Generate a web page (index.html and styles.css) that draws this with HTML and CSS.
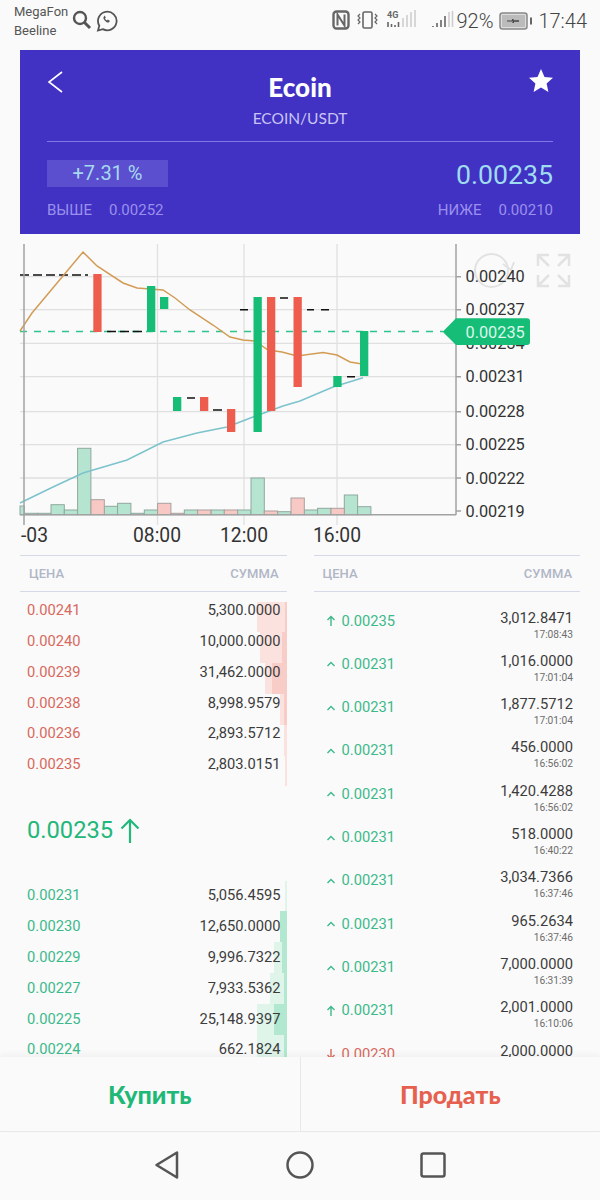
FILE: index.html
```html
<!DOCTYPE html>
<html lang="en">
  <head>
    <meta charset="UTF-8" />
    <meta name="viewport" content="width=device-width, initial-scale=1.0" />
    <title>Ecoin</title>
    <link rel="stylesheet" href="styles.css">
  </head>

  <body>
    <svg class="defs" width="0" height="0">
      <symbol id="arrow-up" viewBox="0 0 10 12"><path d="M5 11V1.500M1.500 5 5 1.500 8.500 5" fill="none" stroke="currentColor" stroke-width="1.400"/></symbol>
      <symbol id="arrow-down" viewBox="0 0 10 12"><path d="M5 1v9.500M1.500 7 5 10.500 8.500 7" fill="none" stroke="currentColor" stroke-width="1.400"/></symbol>
      <symbol id="caret" viewBox="0 0 10 12"><path d="M1.500 8 5 4.500 8.500 8" fill="none" stroke="currentColor" stroke-width="1.400"/></symbol>
    </svg>

    <div class="page">
      <!-- status bar -->
      <div class="status">
        <div class="carriers"><span>MegaFon</span><span>Beeline</span></div>
        <svg class="status-app" width="46" height="24" viewBox="0 0 46 24">
          <circle cx="8" cy="9" r="6" fill="none" stroke="#555" stroke-width="2.400"/>
          <path d="M12.500 13.500 18 19" stroke="#555" stroke-width="3"/>
          <path d="M26 21.500l1.300-4.800a9.300 9.300 0 1 1 3.500 3.400z" fill="none" stroke="#555" stroke-width="1.800"/>
          <path d="M32 7.500c-1 1-.7 2.400.7 4s3 2.600 4.200 1.800l1.100-1.300-2.100-1.400-.9.800c-.9-.4-1.500-1.100-2-2l.8-.9-1.100-2z" fill="#555"/>
        </svg>
        <svg class="status-icons" width="122" height="24" viewBox="0 0 122 24">
          <rect x="1.500" y="2.500" width="15" height="17" rx="3" fill="none" stroke="#666" stroke-width="2.400"/>
          <path d="M5.500 16.500v-11l7 11v-11" fill="none" stroke="#666" stroke-width="2"/>
          <rect x="31" y="3" width="9" height="16" rx="1.500" fill="none" stroke="#666" stroke-width="1.600"/>
          <path d="M28 5l-2 2 2 2-2 2 2 2-2 2M43 5l2 2-2 2 2 2-2 2 2 2" fill="none" stroke="#666" stroke-width="1.200"/>
          <text class="net" x="55" y="9">4G</text>
          <path d="M56 18v-5M59.500 18v-3M63 18v-2M66.500 18v-5" stroke="#666" stroke-width="1.600"/>
          <path d="M71 18v-9M75 18v-12M79 18v-15M83 18v-17" stroke="#ccc" stroke-width="1.500"/>
          <path d="M101 18v-1M105 18v-4M109 18v-7M113 18v-11" stroke="#666" stroke-width="1.600"/>
          <path d="M117 18v-15M120.500 18v-16" stroke="#ccc" stroke-width="1.500"/>
        </svg>
        <span class="status-text percent">92%</span>
        <svg class="battery" width="33" height="18" viewBox="0 0 33 18">
          <rect x="1" y="1" width="27" height="16" rx="2.500" fill="#ddd" stroke="#888" stroke-width="1.500"/>
          <rect x="3" y="3" width="23" height="12" fill="#bbb"/>
          <path d="M8 9h5l1-2v2h6l-5 0-1 2V9" fill="#444" stroke="#444"/>
          <rect x="31" y="5.500" width="2" height="7" fill="#666"/>
        </svg>
        <span class="status-text clock">17:44</span>
      </div>

      <!-- coin header -->
      <div class="market">
        <div class="market-top">
          <svg class="back" width="16" height="22" viewBox="0 0 16 22"><path d="M15 1 2 11l13 10" fill="none" stroke="#fff" stroke-width="1.600"/></svg>
          <div class="market-title">
            <h1>Ecoin</h1>
            <div class="pair">ECOIN/USDT</div>
          </div>
          <svg class="star" width="24" height="23" viewBox="0 0 24 23"><path d="M12 0l3.500 7.900 8.500.9-6.400 5.700 1.800 8.500L12 18.600 4.600 23l1.800-8.500L0 8.800l8.500-.9z" fill="#fff"/></svg>
        </div>
        <div class="market-price">
          <div class="change">+7.31 %</div>
          <div class="last">0.00235</div>
        </div>
        <div class="market-range">
          <div><span class="range-label">ВЫШЕ</span>0.00252</div>
          <div><span class="range-label">НИЖЕ</span>0.00210</div>
        </div>
      </div>

      <!-- chart, drawn in page coordinates -->
      <svg class="chart" width="600" height="310" viewBox="0 240 600 310">
        <g class="grid">
          <path d="M20 276.700H456M20 309.700H456M20 343.300H456M20 376.700H456M20 411.700H456M20 444.700H456M20 478H456"/>
          <path d="M157.500 244V525M244 244V525M337 244V525"/>
        </g>

        <g class="vol-green">
          <rect x="20" y="506" width="4.300" height="8.700"/>
          <rect x="24.300" y="513.300" width="13.300" height="1.400"/>
          <rect x="37.600" y="513.300" width="13.300" height="1.400"/>
          <rect x="51" y="504.700" width="13.300" height="10"/>
          <rect x="64.300" y="510" width="13.300" height="4.700"/>
          <rect x="77.600" y="448.300" width="13.300" height="66.400"/>
          <rect x="104.300" y="506.300" width="13.300" height="8.400"/>
          <rect x="117.600" y="503.300" width="13.300" height="11.400"/>
          <rect x="131" y="513.300" width="13.300" height="1.400"/>
          <rect x="144.300" y="510" width="13.300" height="4.700"/>
          <rect x="184.300" y="510" width="13.300" height="4.700"/>
          <rect x="211" y="510" width="13.300" height="4.700"/>
          <rect x="237.600" y="510" width="13.300" height="4.700"/>
          <rect x="251" y="478" width="13.300" height="36.700"/>
          <rect x="277.600" y="511.700" width="13.300" height="3"/>
          <rect x="304.300" y="510" width="13.300" height="4.700"/>
          <rect x="317.600" y="508.300" width="13.300" height="6.400"/>
          <rect x="344.300" y="495" width="13.300" height="19.700"/>
          <rect x="357.600" y="506.700" width="13.300" height="8"/>
        </g>
        <g class="vol-red">
          <rect x="91" y="499.700" width="13.300" height="15"/>
          <rect x="157.600" y="503.300" width="13.300" height="11.400"/>
          <rect x="171" y="513.300" width="13.300" height="1.400"/>
          <rect x="197.600" y="510" width="13.300" height="4.700"/>
          <rect x="224.300" y="510" width="13.300" height="4.700"/>
          <rect x="264.300" y="511" width="13.300" height="3.700"/>
          <rect x="291" y="498" width="13.300" height="16.700"/>
          <rect x="331" y="508.300" width="13.300" height="6.400"/>
        </g>

        <path class="last-line" d="M20 331.500H443"/>
        <path class="flat" d="M20 275H88M107 331.500H143"/>
        <path class="flat solid" d="M187 398H195M213 410H222M240 309.700H248M280 298H288M307 309.700H314M321 309.700H329M347 376.700H355"/>

        <polyline class="ma-slow" points="20,503 53,487 83,473 127,460 163,442 197,433 227,427 253,417 283,406 300,401 333,387 363,377.700"/>
        <polyline class="ma-fast" points="20,331 32,313 83,252 97,266 123,283 137,288 163,290 175,298 190,310 213,325 230,337 243,340 255,341 268,350 282,352 297,356 323,352.500 337,355 350,362 362,364"/>

        <g class="up">
          <rect x="147" y="286" width="8.300" height="46"/>
          <rect x="160" y="297" width="8.300" height="12"/>
          <rect x="173" y="397" width="8.300" height="14"/>
          <rect x="253.500" y="297" width="8.300" height="135"/>
          <rect x="333.300" y="376" width="8.300" height="11"/>
          <rect x="360" y="331" width="8.300" height="45"/>
        </g>
        <g class="down">
          <rect x="93.300" y="274" width="8.300" height="58"/>
          <rect x="200" y="397" width="8.300" height="14"/>
          <rect x="227" y="409" width="8.300" height="23"/>
          <rect x="267" y="297" width="8.300" height="114"/>
          <rect x="293.500" y="297" width="8.300" height="90"/>
        </g>

        <path class="axis" d="M24 244V525M456 244V515M20 514.700H456M456 276.700H461M456 309.700H461M456 376.700H461M456 411.700H461M456 444.700H461M456 478H461M456 511H461"/>

        <g class="refresh">
          <circle cx="491.500" cy="270.500" r="16.500"/>
          <path d="M503 264l8 6 3-8"/>
        </g>
        <g class="fullscreen">
          <path d="M538 266v-11h11M538 255l11 11M569 266v-11h-11M569 255l-11 11M538 275v11h11M538 286l11-11M569 275v11h-11M569 286l-11-11"/>
        </g>

        <g class="y-label">
          <text x="465.500" y="281.500">0.00240</text>
          <text x="465.500" y="314.800">0.00237</text>
          <text x="465.500" y="348.800">0.00234</text>
          <text x="465.500" y="382">0.00231</text>
          <text x="465.500" y="416.800">0.00228</text>
          <text x="465.500" y="450">0.00225</text>
          <text x="465.500" y="483.800">0.00222</text>
          <text x="465.500" y="516.800">0.00219</text>
        </g>
        <path class="tag" d="M442.700 331.700 456 318.300H527a3 3 0 0 1 3 3V342a3 3 0 0 1-3 3H456z"/>
        <text class="tag-text" x="465.500" y="338">0.00235</text>

        <g class="x-label">
          <text x="21" y="541.500">-03</text>
          <text x="133" y="541.500">08:00</text>
          <text x="220" y="541.500">12:00</text>
          <text x="313" y="541.500">16:00</text>
        </g>
      </svg>

      <!-- order book and trades -->
      <div class="book">
        <div class="book-col">
          <div class="book-head"><span>ЦЕНА</span><span>СУММА</span></div>
          <div class="orders asks">
            <div class="order"><i class="depth" style="width:30px"></i><i class="depth dark" style="width:2px"></i><span class="price sell">0.00241</span><span class="amount">5,300.0000</span></div>
            <div class="order"><i class="depth" style="width:27px"></i><i class="depth dark" style="width:5px"></i><span class="price sell">0.00240</span><span class="amount">10,000.0000</span></div>
            <div class="order"><i class="depth" style="width:22px"></i><i class="depth dark" style="width:15px"></i><span class="price sell">0.00239</span><span class="amount">31,462.0000</span></div>
            <div class="order"><i class="depth" style="width:7px"></i><i class="depth dark" style="width:3px"></i><span class="price sell">0.00238</span><span class="amount">8,998.9579</span></div>
            <div class="order"><i class="depth" style="width:3px"></i><span class="price sell">0.00236</span><span class="amount">2,893.5712</span></div>
            <div class="order"><i class="depth" style="width:2px"></i><span class="price sell">0.00235</span><span class="amount">2,803.0151</span></div>
          </div>
          <div class="mid">
            <span>0.00235</span>
            <svg width="20" height="25" viewBox="0 0 20 25"><path d="M10 25V2M1.500 10.500 10 2l8.500 8.500" fill="none" stroke="currentColor" stroke-width="2.200"/></svg>
          </div>
          <div class="orders bids">
            <div class="order"><i class="depth" style="width:2px"></i><span class="price buy">0.00231</span><span class="amount">5,056.4595</span></div>
            <div class="order"><i class="depth" style="width:7px"></i><i class="depth dark" style="width:7px"></i><span class="price buy">0.00230</span><span class="amount">12,650.0000</span></div>
            <div class="order"><i class="depth" style="width:13px"></i><i class="depth dark" style="width:5px"></i><span class="price buy">0.00229</span><span class="amount">9,996.7322</span></div>
            <div class="order"><i class="depth" style="width:17px"></i><i class="depth dark" style="width:3px"></i><span class="price buy">0.00227</span><span class="amount">7,933.5362</span></div>
            <div class="order"><i class="depth" style="width:30px"></i><i class="depth dark" style="width:13px"></i><span class="price buy">0.00225</span><span class="amount">25,148.9397</span></div>
            <div class="order"><i class="depth" style="width:30px"></i><i class="depth dark" style="width:3px"></i><span class="price buy">0.00224</span><span class="amount">662.1824</span></div>
          </div>
        </div>

        <div class="book-col">
          <div class="book-head"><span>ЦЕНА</span><span>СУММА</span></div>
          <div class="trades">
            <div class="trade"><span class="price buy"><svg><use href="#arrow-up"/></svg>0.00235</span><div class="trade-right"><div class="amount">3,012.8471</div><div class="time">17:08:43</div></div></div>
            <div class="trade"><span class="price buy"><svg><use href="#caret"/></svg>0.00231</span><div class="trade-right"><div class="amount">1,016.0000</div><div class="time">17:01:04</div></div></div>
            <div class="trade"><span class="price buy"><svg><use href="#caret"/></svg>0.00231</span><div class="trade-right"><div class="amount">1,877.5712</div><div class="time">17:01:04</div></div></div>
            <div class="trade"><span class="price buy"><svg><use href="#caret"/></svg>0.00231</span><div class="trade-right"><div class="amount">456.0000</div><div class="time">16:56:02</div></div></div>
            <div class="trade"><span class="price buy"><svg><use href="#caret"/></svg>0.00231</span><div class="trade-right"><div class="amount">1,420.4288</div><div class="time">16:56:02</div></div></div>
            <div class="trade"><span class="price buy"><svg><use href="#caret"/></svg>0.00231</span><div class="trade-right"><div class="amount">518.0000</div><div class="time">16:40:22</div></div></div>
            <div class="trade"><span class="price buy"><svg><use href="#caret"/></svg>0.00231</span><div class="trade-right"><div class="amount">3,034.7366</div><div class="time">16:37:46</div></div></div>
            <div class="trade"><span class="price buy"><svg><use href="#caret"/></svg>0.00231</span><div class="trade-right"><div class="amount">965.2634</div><div class="time">16:37:46</div></div></div>
            <div class="trade"><span class="price buy"><svg><use href="#caret"/></svg>0.00231</span><div class="trade-right"><div class="amount">7,000.0000</div><div class="time">16:31:39</div></div></div>
            <div class="trade"><span class="price buy"><svg><use href="#arrow-up"/></svg>0.00231</span><div class="trade-right"><div class="amount">2,001.0000</div><div class="time">16:10:06</div></div></div>
            <div class="trade"><span class="price sell"><svg><use href="#arrow-down"/></svg>0.00230</span><div class="trade-right"><div class="amount">2,000.0000</div></div></div>
          </div>
        </div>
      </div>

      <div class="actions">
        <button class="action buy-button">Купить</button>
        <button class="action sell-button">Продать</button>
      </div>

      <div class="nav">
        <svg width="26" height="30" viewBox="0 0 26 30"><path d="M2.500 15 23 2.500v25z" fill="none" stroke="#555" stroke-width="2.500" stroke-linejoin="round"/></svg>
        <svg width="28" height="28" viewBox="0 0 28 28"><circle cx="14" cy="14" r="12.500" fill="none" stroke="#555" stroke-width="2.500"/></svg>
        <svg width="26" height="26" viewBox="0 0 26 26"><rect x="1.500" y="1.500" width="23" height="23" rx="2" fill="none" stroke="#555" stroke-width="2.500"/></svg>
      </div>
    </div>
  </body>
</html>
```

FILE: styles.css
```css
body {
  margin: 0;
  background: #fafafa;
  font-family: Roboto, "Liberation Sans", sans-serif;
}

.defs {
  position: absolute;
}

.page {
  width: 600px;
  height: 1200px;
  display: flex;
  flex-direction: column;
  overflow: hidden;
  background: #fafafa;
}

/* Status bar */
.status {
  height: 50px;
  flex: none;
  box-sizing: border-box;
  padding-bottom: 8px;
  display: flex;
  align-items: center;
  color: #555;
}

.carriers {
  display: flex;
  flex-direction: column;
  gap: 3px;
  margin-left: 14px;
  font-size: 13px;
  line-height: 16px;
  width: 58px;
}

.status-icons {
  margin-left: auto;
}

.net {
  font-size: 9px;
  font-weight: 700;
  fill: #666;
}

.status-text {
  font-size: 20px;
  font-weight: 300;
  color: #444;
}

.percent {
  margin-left: 2px;
}

.battery {
  margin-left: 6px;
}

.clock {
  margin-left: 6px;
  margin-right: 13px;
}

/* Coin header */
.market {
  height: 184px;
  flex: none;
  margin: 0 20px;
  padding: 0 27px;
  box-sizing: border-box;
  background: #4132c4;
}

.market-top {
  height: 92px;
  box-sizing: border-box;
  border-bottom: 1.5px solid #8078e8;
  display: grid;
  grid-template-columns: 40px 1fr 40px;
}

.back {
  margin-top: 21px;
}

.star {
  margin-top: 19px;
  justify-self: end;
}

.market-title {
  text-align: center;
}

.market-title h1 {
  margin: 21px 0 0;
  font-family: Lato, Roboto, sans-serif;
  font-size: 26px;
  font-weight: 900;
  line-height: 32px;
  color: #fff;
}

.pair {
  margin-top: 5px;
  font-family: Lato, Roboto, sans-serif;
  font-size: 15.500px;
  line-height: 20px;
  color: #c9c4f3;
}

.market-price {
  margin-top: 18px;
  display: flex;
  justify-content: space-between;
  align-items: flex-start;
}

.change {
  width: 121px;
  height: 27px;
  background: #5b4fcf;
  color: #a6d9f0;
  font-size: 20px;
  line-height: 27px;
  text-align: center;
}

.last {
  color: #9fdcf0;
  font-size: 26.700px;
  line-height: 30px;
}

.market-range {
  margin-top: 10px;
  display: flex;
  justify-content: space-between;
  color: #9a90ec;
  font-size: 15px;
  line-height: 20px;
}

.range-label {
  margin-right: 17px;
}

/* Chart */
.chart {
  display: block;
  flex: none;
  margin-top: 6px;
}

.grid path {
  fill: none;
  stroke: #e0e0e0;
  stroke-width: 1.300;
}

.vol-green rect {
  fill: #b5e5d0;
  stroke: #8fa89e;
}

.vol-red rect {
  fill: #f8c8c4;
  stroke: #a9a09e;
}

.last-line {
  stroke: #2ec48d;
  stroke-width: 1.600;
  stroke-dasharray: 7 7;
}

.flat {
  stroke: #111;
  stroke-width: 1.500;
  stroke-dasharray: 9 4;
}

.flat.solid {
  stroke-dasharray: none;
}

.ma-slow,
.ma-fast {
  fill: none;
  stroke-width: 1.500;
}

.ma-slow {
  stroke: #7cc3cc;
}

.ma-fast {
  stroke: #d29c55;
}

.up rect {
  fill: #15bd77;
}

.down rect {
  fill: #ee5c4d;
}

.axis {
  fill: none;
  stroke: #a2a2a2;
  stroke-width: 1.500;
}

.refresh circle,
.refresh path {
  fill: none;
  stroke: #e2e2e2;
  stroke-width: 2;
}

.fullscreen path {
  fill: none;
  stroke: #e2e2e2;
  stroke-width: 2.500;
}

.y-label text {
  font-size: 16.300px;
  fill: #333;
}

.tag {
  fill: #15bd77;
}

.tag-text {
  font-size: 16.300px;
  fill: #dcf6ea;
}

.x-label text {
  font-size: 19.300px;
  fill: #333;
}

/* Order book */
.book {
  height: 507px;
  flex: none;
  overflow: hidden;
  display: flex;
  gap: 27px;
  padding: 5px 20px 0;
  box-sizing: border-box;
}

.book-col {
  flex: 1;
  min-width: 0;
}

.book-head {
  height: 37px;
  box-sizing: border-box;
  border-top: 1.500px solid #d5d9e6;
  border-bottom: 1.500px solid #d5d9e6;
  display: flex;
  justify-content: space-between;
  align-items: center;
  padding: 0 8px 0 9px;
  color: #b0b6c6;
  font-size: 13px;
  font-weight: 500;
}

.asks {
  padding-top: 3.300px;
}

.order {
  position: relative;
  height: 30.800px;
  display: flex;
  justify-content: space-between;
  align-items: center;
  padding: 0 6px 0 7px;
}

.depth {
  position: absolute;
  right: 0;
  height: 30.800px;
}

.asks .depth {
  top: 6.400px;
  background: #fce2de;
}

.asks .depth.dark {
  background: #f9cdc7;
}

.bids .depth {
  top: 0;
  background: #dff5ea;
}

.bids .depth.dark {
  background: #b3e8d0;
}

.price,
.amount {
  position: relative;
  font-size: 14.700px;
  line-height: 17px;
}

.price.buy {
  color: #3cb98a;
}

.price.sell {
  color: #d8685c;
}

.amount {
  color: #3c3c3c;
}

.mid {
  height: 100.500px;
  display: flex;
  align-items: center;
  gap: 7px;
  padding-left: 7px;
  color: #22b77b;
  font-size: 23.700px;
}

/* Trades */
.trades {
  padding-top: 17.500px;
}

.trade {
  height: 43.330px;
  display: flex;
  justify-content: space-between;
  padding: 0 7px 0 12px;
}

.trade .price {
  display: flex;
  align-items: center;
  height: 17px;
  margin-top: 3px;
}

.trade .price svg {
  width: 10px;
  height: 12px;
  margin-right: 6px;
}

.trade-right {
  text-align: right;
}

.time {
  font-size: 10.200px;
  line-height: 14px;
  margin-top: 1px;
  color: #6d6d6d;
}

/* Buy and sell */
.actions {
  height: 75px;
  flex: none;
  position: relative;
  display: flex;
  background: #fafafa;
  border-bottom: 1px solid #e8e8e8;
  box-sizing: border-box;
  box-shadow: 0 -3px 6px rgba(0, 0, 0, 0.04);
}

.action {
  flex: 1;
  border: none;
  background: none;
  padding: 0;
  font-family: Lato, Roboto, sans-serif;
  font-size: 25px;
  font-weight: 900;
}

.buy-button {
  color: #1fb877;
  border-right: 1px solid #e8e8e8;
}

.sell-button {
  color: #e6604f;
}

/* Android nav */
.nav {
  flex: 1;
  display: flex;
  align-items: center;
  justify-content: space-between;
  padding: 0 154px 2px;
}
```
